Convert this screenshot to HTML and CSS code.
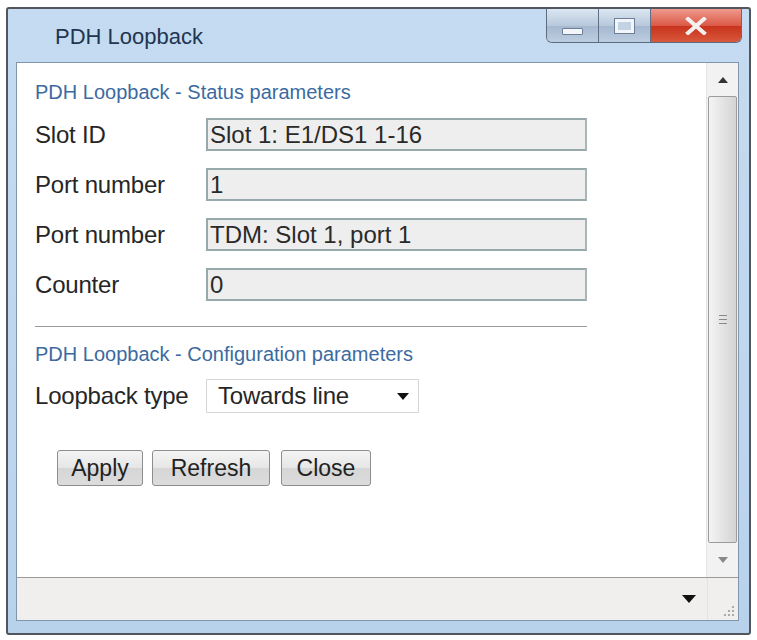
FILE: index.html
```html
<!DOCTYPE html>
<html lang="en">

<head>
    <meta charset="UTF-8">
    <title>PDH Loopback</title>
    <link rel="stylesheet" href="styles.css">
</head>

<body>
    <div class="window">

        <div class="title-bar">
            <span class="title">PDH Loopback</span>
            <div class="caption-buttons">
                <div class="cap-btn min-btn"><span class="min-glyph"></span></div>
                <div class="cap-btn max-btn"><span class="max-glyph"></span></div>
                <div class="cap-btn close-btn">
                    <svg width="22" height="18" viewBox="0 0 22 18">
                        <path d="M3 2 L19 16 M19 2 L3 16" stroke="#f4f0ee" stroke-width="4" stroke-linecap="square" />
                    </svg>
                </div>
            </div>
        </div>

        <div class="panel">
            <div class="panel-body">
                <div class="content">

                    <div class="section-title">PDH Loopback - Status parameters</div>

                    <div class="form-grid">
                        <label>Slot ID</label>
                        <div class="field">Slot 1: E1/DS1 1-16</div>

                        <label>Port number</label>
                        <div class="field">1</div>

                        <label>Port number</label>
                        <div class="field">TDM: Slot 1, port 1</div>

                        <label>Counter</label>
                        <div class="field">0</div>
                    </div>

                    <hr class="divider">

                    <div class="section-title second">PDH Loopback - Configuration parameters</div>

                    <div class="select-row">
                        <label>Loopback type</label>
                        <div class="select">
                            <span>Towards line</span>
                            <svg width="12" height="7" viewBox="0 0 12 7">
                                <path d="M0 0 L12 0 L6 7 Z" fill="#111" />
                            </svg>
                        </div>
                    </div>

                    <div class="actions">
                        <button class="action-btn apply">Apply</button>
                        <button class="action-btn refresh">Refresh</button>
                        <button class="action-btn close">Close</button>
                    </div>
                </div>

                <div class="scrollbar">
                    <div class="arrow-btn">
                        <svg width="10" height="6" viewBox="0 0 10 6">
                            <path d="M0 6 L10 6 L5 0 Z" fill="#333" />
                        </svg>
                    </div>
                    <div class="thumb">
                        <span class="grip"></span>
                    </div>
                    <div class="arrow-btn down">
                        <svg width="10" height="6" viewBox="0 0 10 6">
                            <path d="M0 0 L10 0 L5 6 Z" fill="#888" />
                        </svg>
                    </div>
                </div>
            </div>

            <div class="status-bar">
                <div class="status-main">
                    <svg width="14" height="8" viewBox="0 0 14 8">
                        <path d="M0 0 L14 0 L7 8 Z" fill="#111" />
                    </svg>
                </div>
                <div class="status-grip">
                    <svg width="12" height="12" viewBox="0 0 12 12">
                        <!-- resize dots -->
                        <rect x="9" y="1" width="2" height="2" fill="#aaa" />
                        <rect x="5" y="5" width="2" height="2" fill="#aaa" />
                        <rect x="9" y="5" width="2" height="2" fill="#aaa" />
                        <rect x="1" y="9" width="2" height="2" fill="#aaa" />
                        <rect x="5" y="9" width="2" height="2" fill="#aaa" />
                        <rect x="9" y="9" width="2" height="2" fill="#aaa" />
                    </svg>
                </div>
            </div>
        </div>
    </div>
</body>

</html>
```

FILE: styles.css
```css
body {
    margin: 0;
    background-color: #ffffff;
    font-family: "Liberation Sans", Arial, sans-serif;
}

.window {
    margin: 7px 0 0 6px;
    width: 723px;
    height: 612px;
    border: 2px solid #50565c;
    border-radius: 3px;
    background: linear-gradient(#c5dbf1, #b9d2ec);
    display: flex;
    flex-direction: column;
    padding: 0 10px 12px 8px;
}

.title-bar {
    height: 53px;
    display: flex;
    justify-content: space-between;
    align-items: flex-start;
}

.title {
    margin: 15px 0 0 39px;
    font-size: 22px;
    color: #1f3550;
}

.caption-buttons {
    display: flex;
    margin-right: -3px;
    border: 1px solid #5b6c80;
    border-top: none;
    border-radius: 0 0 6px 6px;
    overflow: hidden;
    height: 33px;
}

.cap-btn {
    display: flex;
    align-items: center;
    justify-content: center;
}

.min-btn,
.max-btn {
    width: 51px;
    background: linear-gradient(#dbe6f2, #b8c9dc 50%, #a5b8cf 51%, #bccde0);
    border-right: 1px solid #5f7086;
}

.min-glyph {
    width: 19px;
    height: 5px;
    margin-top: 12px;
    background: #f2f6fa;
    border: 1px solid #6d7f96;
    border-radius: 1px;
}

.max-glyph {
    width: 19px;
    height: 14px;
    border: 3px solid #f2f6fa;
    outline: 1px solid #6d7f96;
    background: #c4d3e4;
    box-sizing: border-box;
}

.close-btn {
    width: 90px;
    background: linear-gradient(#ee9a8e, #db5a47 50%, #c8321d 51%, #d8583c);
}

.panel {
    flex: 1;
    display: flex;
    flex-direction: column;
    border: 1px solid #8196ad;
    background-color: #ffffff;
}

.panel-body {
    flex: 1;
    display: flex;
}

.content {
    flex: 1;
    padding: 18px 0 0 18px;
    color: #262626;
}

.section-title {
    font-size: 20px;
    line-height: 22px;
    color: #3c6a9f;
}

.section-title.second {
    margin-top: 16px;
}

.form-grid,
.select-row {
    display: grid;
    grid-template-columns: 171px 381px;
    align-items: center;
}

.form-grid {
    margin-top: 15px;
    grid-auto-rows: 33px;
    row-gap: 17px;
}

label {
    font-size: 24px;
    letter-spacing: -0.2px;
}

.field {
    height: 33px;
    box-sizing: border-box;
    border: 2px solid #97a9ab;
    border-right-color: #a9b5b6;
    background-color: #eeeeee;
    font-size: 24px;
    line-height: 29px;
    padding-left: 2px;
    color: #2a2a2a;
}

.divider {
    margin: 25px 0 0 0;
    width: 552px;
    border: none;
    border-top: 1px solid #9a9a9a;
    height: 0;
}

.select-row {
    margin-top: 14px;
}

.select {
    width: 213px;
    height: 34px;
    box-sizing: border-box;
    border: 1px solid #d6d6d6;
    display: flex;
    align-items: center;
    justify-content: space-between;
    padding: 0 9px 0 11px;
    font-size: 24px;
    letter-spacing: -0.2px;
}

.actions {
    margin: 37px 0 0 22px;
    display: flex;
    gap: 9px;
}

.action-btn {
    height: 36px;
    font-family: "Liberation Sans", Arial, sans-serif;
    font-size: 23px;
    color: #222222;
    padding: 0 6px;
    border: 1px solid #8d8d8d;
    border-radius: 3px;
    background: linear-gradient(#f4f4f4, #e6e6e6 50%, #d6d6d6 51%, #dcdcdc);
}

.apply {
    width: 86px;
}

.refresh {
    width: 118px;
}

.close {
    width: 90px;
    margin-left: 2px;
}

.scrollbar {
    width: 31px;
    display: flex;
    flex-direction: column;
    background-color: #f2f2f2;
    border-left: 1px solid #e4e4e4;
}

.arrow-btn {
    height: 33px;
    display: flex;
    align-items: center;
    justify-content: center;
}

.arrow-btn.down {
    height: 34px;
}

.thumb {
    flex: 1;
    margin: 0 1px;
    border: 1px solid #9c9c9c;
    border-radius: 2px;
    background: linear-gradient(90deg, #f4f4f4, #e4e4e4 50%, #d4d4d4);
    display: flex;
    align-items: center;
    justify-content: center;
}

.grip {
    width: 8px;
    height: 7px;
    border-top: 1px solid #888;
    border-bottom: 1px solid #888;
}

.grip::after {
    content: "";
    display: block;
    margin-top: 3px;
    border-top: 1px solid #888;
}

.status-bar {
    height: 42px;
    display: flex;
    border-top: 1px solid #9b9b9b;
    background-color: #f0efed;
}

.status-main {
    flex: 1;
    display: flex;
    align-items: center;
    justify-content: flex-end;
    padding-right: 11px;
}

.status-grip {
    width: 31px;
    border-left: 1px solid #e2e2e2;
    display: flex;
    align-items: flex-end;
    justify-content: flex-end;
    padding: 0 3px 3px 0;
    box-sizing: border-box;
}
```
